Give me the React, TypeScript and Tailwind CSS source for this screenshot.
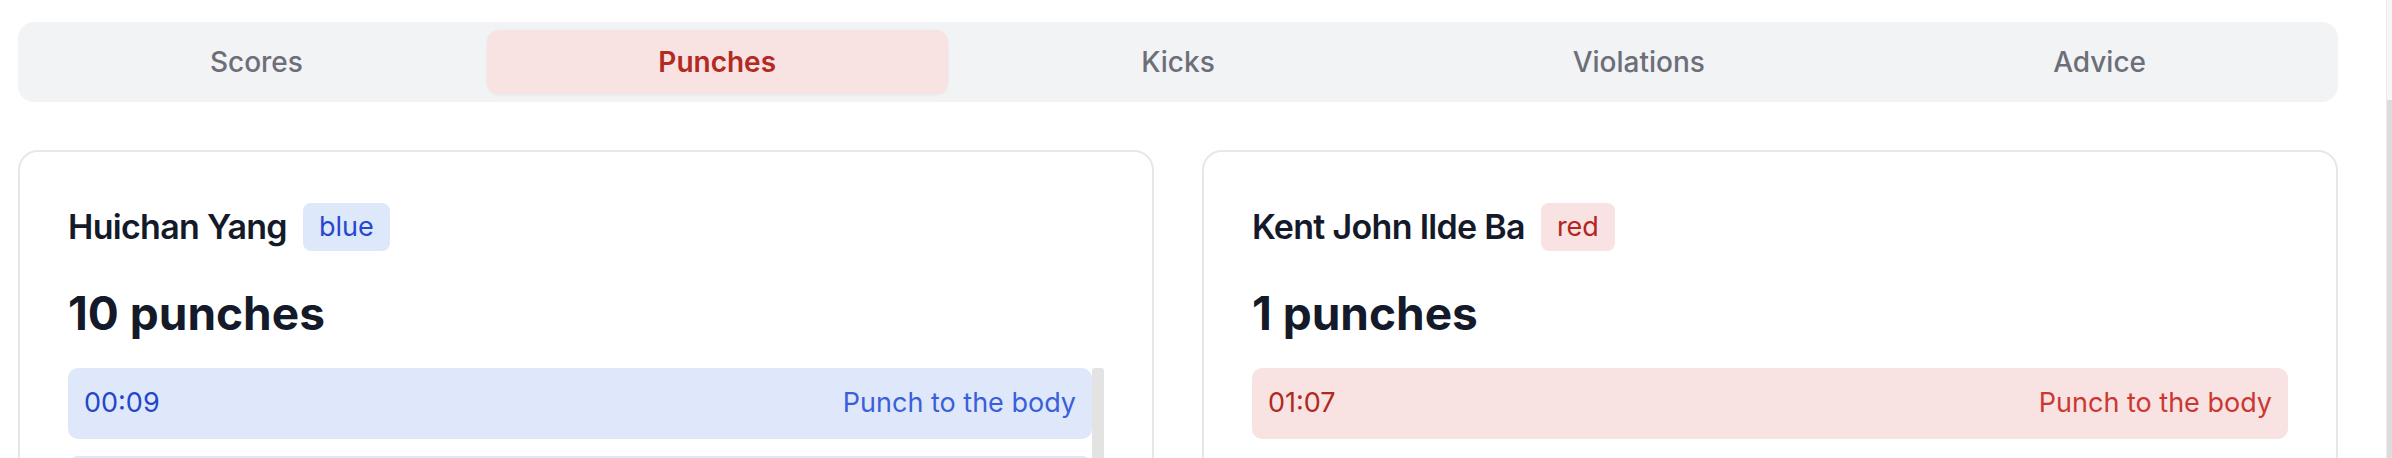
import React from 'react'

type Hit = { time: string; label: string }

const tabs = ['Scores', 'Punches', 'Kicks', 'Violations', 'Advice']

const blueHits: Hit[] = [
  { time: '00:09', label: 'Punch to the body' },
  { time: '00:21', label: 'Punch to the body' },
  { time: '00:34', label: 'Punch to the body' },
  { time: '00:48', label: 'Punch to the body' },
  { time: '01:02', label: 'Punch to the body' },
  { time: '01:15', label: 'Punch to the body' },
  { time: '01:29', label: 'Punch to the body' },
  { time: '01:40', label: 'Punch to the body' },
  { time: '01:52', label: 'Punch to the body' },
  { time: '01:58', label: 'Punch to the body' },
]

const redHits: Hit[] = [{ time: '01:07', label: 'Punch to the body' }]

function FighterCard({
  name,
  corner,
  hits,
}: {
  name: string
  corner: 'blue' | 'red'
  hits: Hit[]
}) {
  const blue = corner === 'blue'
  return (
    <div className="rounded-[20px] border-2 border-[#e6e7ea] bg-white px-[48px] pt-[48px] pb-[48px]">
      {/* Nombre + esquina */}
      <div className="flex h-[54px] items-center gap-[16px]">
        <span className="text-[34px] font-semibold leading-[54px] tracking-[-0.7px] text-[#141a29]">
          {name}
        </span>
        <span
          className={`flex h-[48px] items-center rounded-[8px] px-[16px] text-[27px] ${
            blue ? 'bg-[#dee8fb] text-[#2647d0]' : 'bg-[#f8e2e2] text-[#b3261f]'
          }`}
        >
          {corner}
        </span>
      </div>

      <h2 className="mt-[30px] text-[46px] font-bold leading-[58px] text-[#141a29]">
        {hits.length} punches
      </h2>

      <div className="mt-[26px] flex h-[700px] overflow-hidden">
        <div className="flex flex-1 flex-col gap-[17px]">
          {hits.map((h, i) => (
            <div
              key={i}
              className={`flex h-[71px] shrink-0 items-center justify-between rounded-[10px] px-[16px] text-[27px] ${
                blue ? 'bg-[#dee8fa]' : 'bg-[#f8e2e2]'
              }`}
            >
              <span className={blue ? 'text-[#2346c9]' : 'text-[#b0291f]'}>{h.time}</span>
              <span className={blue ? 'text-[#3a5fd8]' : 'text-[#cb3832]'}>{h.label}</span>
            </div>
          ))}
        </div>
        {/* barra de scroll de la lista */}
        {hits.length > 3 && (
          <div className="w-[12px] shrink-0">
            <div className="h-[420px] rounded-t-[3px] bg-[#e3e3e3]" />
          </div>
        )}
      </div>
    </div>
  )
}

export default function App() {
  return (
    <div className="flex h-[458px] overflow-hidden bg-white font-['Inter',sans-serif]">
      <div className="w-[2386px] shrink-0 pt-[22px] pl-[18px]">
        <div className="w-[2320px]">
          {/* Tabs */}
          <div className="grid h-[80px] grid-cols-5 rounded-[16px] bg-[#f2f3f5] p-[8px]">
            {tabs.map((t) => {
              const active = t === 'Punches'
              return (
                <button
                  key={t}
                  className={`flex h-[64px] items-center justify-center rounded-[12px] text-[28px] ${
                    active
                      ? 'bg-[#f8e2e2] font-semibold text-[#b22a22] shadow-[0_1px_3px_rgba(0,0,0,0.06)]'
                      : 'font-medium text-[#6c6f78]'
                  }`}
                >
                  {t}
                </button>
              )
            })}
          </div>

          <div className="mt-[48px] grid grid-cols-2 gap-[48px]">
            <FighterCard name="Huichan Yang" corner="blue" hits={blueHits} />
            <FighterCard name="Kent John Ilde Ba" corner="red" hits={redHits} />
          </div>
        </div>
      </div>
      {/* scrollbar de la página */}
      <div className="flex w-[6px] shrink-0 flex-col border-l border-[#ececec] bg-[#f6f6f6]">
        <div className="mt-[100px] h-[358px] bg-[#dcdcdc]" />
      </div>
    </div>
  )
}
